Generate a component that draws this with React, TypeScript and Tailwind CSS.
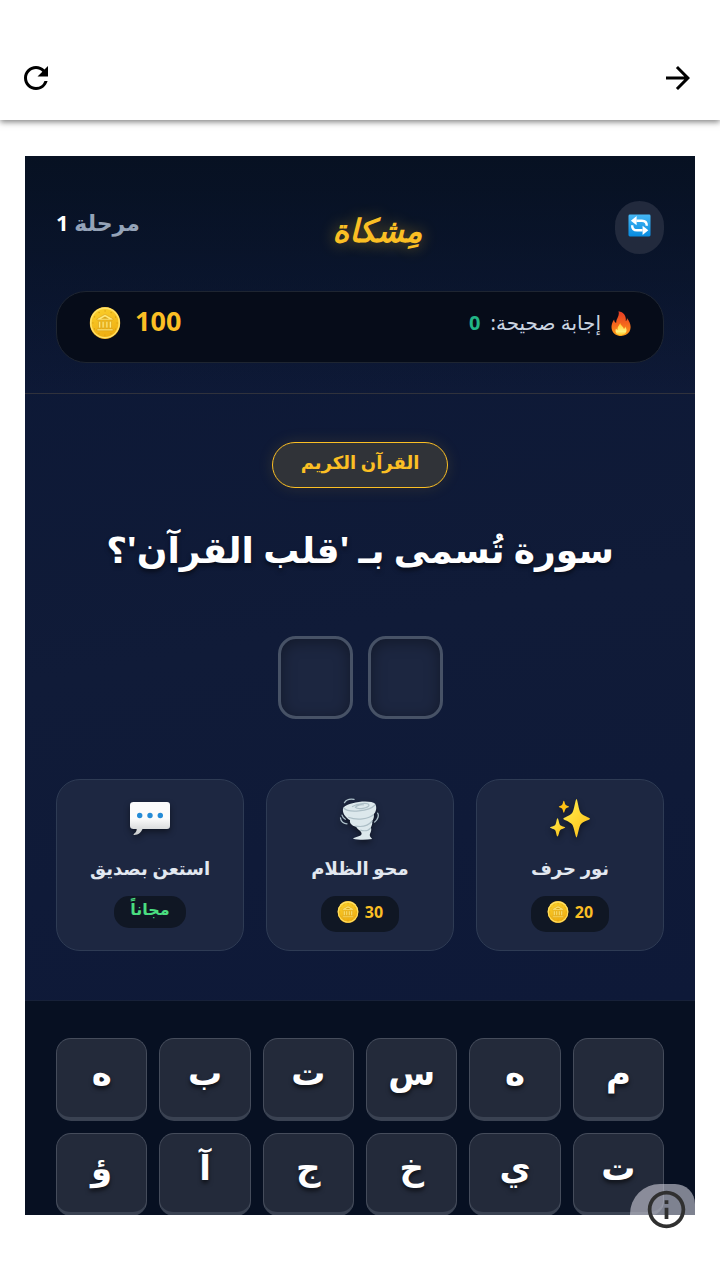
import { useId } from "react";
import { MdRefresh, MdArrowForward, MdInfoOutline } from "react-icons/md";

const hints = [
  { title: "نور حرف", cost: 20, icon: "sparkles" },
  { title: "محو الظلام", cost: 30, icon: "tornado" },
  { title: "استعن بصديق", cost: 0, icon: "chat" },
];

const letters = ["م", "ه", "س", "ت", "ب", "ه", "ت", "ي", "خ", "ج", "آ", "ؤ"];

function Coin({ className }: { className: string }) {
  const id = useId();
  return (
    <svg viewBox="0 0 32 32" className={className} aria-hidden="true">
      <defs>
        <linearGradient id={id} x1="0" y1="0" x2="0.3" y2="1">
          <stop offset="0" stopColor="#fbd02b" />
          <stop offset="1" stopColor="#efb013" />
        </linearGradient>
      </defs>
      <ellipse cx="16" cy="16" rx="15.2" ry="16" fill="#e5a51b" />
      <ellipse cx="16" cy="15.8" rx="15" ry="15.6" fill="#ffe36a" />
      <ellipse cx="16" cy="16" rx="13.5" ry="14" fill={`url(#${id})`} />
      <circle cx="16" cy="16" r="12.1" fill="none" stroke="#d99e13" strokeWidth="1.3" strokeLinecap="round" strokeDasharray="0.1 6.2" />
      <path d="M8 11.8L16 7.3L24 11.8V13H8ZM9.5 14.3H11.7V21H9.5ZM13.1 14.3H15.1V21H13.1ZM16.9 14.3H18.9V21H16.9ZM20.3 14.3H22.5V21H20.3ZM8 22H24V23.7H8Z" fill="#ffe978" stroke="#d99e18" strokeWidth="0.6" />
      <path d="M12 11.7L16 9.5L20 11.7Z" fill="#d9a41b" />
    </svg>
  );
}

function Fire() {
  return (
    <svg viewBox="0 0 20 25" className="h-[25px] w-5" aria-hidden="true">
      <defs>
        <linearGradient id="flame" x1="0" y1="0" x2="0" y2="1">
          <stop offset="0" stopColor="#e53b25" />
          <stop offset="0.5" stopColor="#f4641d" />
          <stop offset="1" stopColor="#ff9f16" />
        </linearGradient>
        <linearGradient id="flameCore" x1="0" y1="0" x2="0" y2="1">
          <stop offset="0" stopColor="#ffc928" />
          <stop offset="0.7" stopColor="#fff17d" />
          <stop offset="1" stopColor="#ffc31d" />
        </linearGradient>
      </defs>
      <path d="M7.4 0.3C13.6 1.2 15.4 6 14.7 10.1C15.8 9.4 16 8.1 15.9 6.9C20.8 12.6 21.2 20.5 15 23.8C11.7 25.5 7.2 25.3 4 23.2C-0.7 20 -0.3 13.1 3.1 8.5C3.3 10.8 4.2 11.6 5.2 11.9C4.7 7.8 9.2 4.8 7.4 0.3Z" fill="url(#flame)" />
      <path d="M9.3 11.7C9 14.3 12.4 15.1 12.9 18C14 17.4 14.1 16.5 14 15.6C17.3 19.2 15.1 23.8 10.2 24.2C5.4 24.1 3.5 20.8 5 17.4C5.5 18.3 6.1 18.7 6.8 18.7C5.9 15.8 8.4 14.5 9.3 11.7Z" fill="url(#flameCore)" />
    </svg>
  );
}

function SwapIcon() {
  return (
    <svg viewBox="0 0 24 24" className="mb-1 h-[23px] w-[23px]" aria-hidden="true">
      <defs>
        <linearGradient id="swapTile" x1="0" y1="0" x2="0" y2="1">
          <stop offset="0" stopColor="#46b7f4" />
          <stop offset="1" stopColor="#078be0" />
        </linearGradient>
      </defs>
      <rect x="0.5" y="0.5" width="23" height="23" rx="1.5" fill="url(#swapTile)" />
      <path d="M8.8 7H14.5C18.7 7 19.6 9.2 19.6 12.3M15.2 17H9.5C5.3 17 4.3 14.7 4.3 11.7" fill="none" stroke="white" strokeWidth="2.5" />
      <path d="M3 7L9 2.2V11.8ZM21.2 17L15.2 12.2V21.8Z" fill="white" />
    </svg>
  );
}

function HintIcon({ kind }: { kind: string }) {
  if (kind === "sparkles") {
    return (
      <svg viewBox="0 0 42 42" className="h-[42px] w-[42px] drop-shadow-[0_3px_3px_rgba(0,0,0,0.45)]" aria-hidden="true">
        <defs>
          <linearGradient id="star" x1="0" y1="0" x2="1" y2="1">
            <stop offset="0.2" stopColor="#ffe645" />
            <stop offset="1" stopColor="#fdbd14" />
          </linearGradient>
        </defs>
        <path d="M27.5 1C28.5 1 29.7 12.5 31.8 15.1C34 17.9 41 19.7 41 20.7C41 21.7 33.9 23.4 31.8 26.2C29.7 28.9 28.5 39.5 27.5 39.5C26.5 39.5 25.2 28.9 23 26.2C20.7 23.5 14.3 21.7 14.3 20.7C14.3 19.7 20.9 18.1 23.1 15.1C25.2 12.4 26.4 1 27.5 1Z" fill="url(#star)" />
        <path d="M8.5 20.2C9.5 20.2 10 25.3 11.1 27C12.1 28.2 16.2 28.8 16.2 29.6C16.2 30.4 12.2 31 11.1 32.2C10 33.7 9.5 38.5 8.5 38.5C7.5 38.5 7.3 33.8 6.2 32.2C5.2 31 1 30.4 1 29.6C1 28.8 5.1 28.3 6.2 27C7.4 25.3 7.6 20.2 8.5 20.2Z" fill="url(#star)" />
        <path d="M14.8 2.8C15.5 2.8 15.8 6 16.8 7.1C17.7 8 20 8.2 20 8.8C20 9.4 17.7 9.6 16.8 10.6C15.8 11.8 15.5 14.8 14.8 14.8C14.1 14.8 14 11.8 13 10.6C12.1 9.6 9.8 9.4 9.8 8.8C9.8 8.2 12.1 8 13 7.1C14 6 14.1 2.8 14.8 2.8Z" fill="#ffc114" />
      </svg>
    );
  }
  if (kind === "tornado") {
    return (
      <svg viewBox="0 0 42 42" className="h-[42px] w-[42px] drop-shadow-[0_3px_3px_rgba(0,0,0,0.45)]" aria-hidden="true">
        <path d="M14 40.7C16 38.2 22.5 39 22.6 35.7C22.3 32.5 18.5 31.8 17.1 28.8C12.3 27.8 10.2 24.6 11.1 22.3C6.4 19.7 2.4 14.1 4.4 9.5C9.7 3.7 31.8 1.3 36.1 5.8C38.2 9.4 37.2 14 34.7 16.3C35.5 19.2 34.3 21.4 33.2 23C33.7 26.3 32.4 28.1 31.8 29.8C33.2 32.4 31.1 34.8 30.8 37C30.6 38.5 32 39.8 33.2 41C27 42 19 42 14 40.7Z" fill="#dce8ec" />
        <path d="M4.6 10C9.5 15.1 29.9 13.5 36.1 7M9.2 19.2C18 22.5 30 21.2 34.7 16.3M16.4 28C22.5 29.2 29 28 33.2 23M21.3 32.2C25.5 33.3 29.5 32.6 31.8 29.8M13 8.8C19.1 5 29.2 4.3 30 7.2C29.6 10.2 18.9 11.8 16.4 9.4C17.8 7 23.8 6 24.8 7.2" fill="none" stroke="#adbfc7" strokeWidth="1.2" />
        <path d="M5.5 4.6C7.6 1.3 11.5 0.8 15 1.4M1.5 20C1.7 23.5 4.8 25.7 8 25.8M38.6 15.2C40.2 17.2 38.8 21.8 35.7 24.1M3 17.1C3.5 19 4.6 20.3 6.3 21.2" fill="none" stroke="#adc0c9" strokeWidth="1.3" strokeLinecap="round" />
      </svg>
    );
  }
  return (
    <svg viewBox="0 0 42 42" className="h-[42px] w-[42px] drop-shadow-[0_3px_3px_rgba(0,0,0,0.45)]" aria-hidden="true">
      <defs>
        <linearGradient id="bubble" x1="0" y1="0" x2="0" y2="1">
          <stop offset="0.5" stopColor="#fbfbfb" />
          <stop offset="1" stopColor="#c8cbcc" />
        </linearGradient>
      </defs>
      <path d="M4.5 4H38C40 4 41 5 41 7V28C41 30 40 31 38 31H13.5C12.4 34 9.3 37 5.4 37C4.4 37 4.2 36.3 5 35.7C7 34.4 7.8 32.8 7.7 31H4.5C2.3 31 1 30 1 28V7C1 5 2.3 4 4.5 4Z" fill="url(#bubble)" />
      <circle cx="10.7" cy="17.5" r="2.7" fill="#258bd6" />
      <circle cx="21" cy="17.5" r="2.7" fill="#258bd6" />
      <circle cx="31.3" cy="17.5" r="2.7" fill="#258bd6" />
    </svg>
  );
}

export default function App() {
  return (
    <div className="flex h-screen flex-col bg-white font-['Noto_Sans','DejaVu_Sans',sans-serif]">
      <header className="z-10 flex h-[120px] shrink-0 items-end justify-between bg-white px-[18px] pb-6 text-black shadow-[0_2px_6px_rgba(0,0,0,0.5)]">
        <button aria-label="تحديث"><MdRefresh className="h-9 w-9" /></button>
        <button aria-label="رجوع" className="pr-1.5"><MdArrowForward className="h-9 w-9" /></button>
      </header>

      <main className="min-h-0 flex-1 px-[25px] pt-9 pb-[65px]">
        <div className="relative h-full">
          <div dir="rtl" className="flex h-full flex-col overflow-hidden bg-[linear-gradient(170deg,#0b1735,#101b38_45%,#0d1838)]">
            <section className="shrink-0 border-b border-[#30323c] bg-gradient-to-b from-[#071122] to-transparent px-[31px] pt-[45px] pb-[30px]">
              <div className="flex h-[53px] items-center justify-between">
                <button aria-label="تبديل" className="flex h-[53px] w-[49px] items-center justify-center rounded-full bg-[#222a3d]">
                  <SwapIcon />
                </button>
                <h1 className="pt-2 text-center font-['DejaVu_Sans',sans-serif] text-[32px] leading-[53px] font-bold text-[#fbbf24] italic [text-shadow:0_0_16px_rgba(251,191,36,0.45)]">
                  مِشكاة
                </h1>
                <p className="pb-3 text-left text-[22px] leading-8 font-bold text-[#94a3b8]">
                  مرحلة <span className="text-white">1</span>
                </p>
              </div>
              <div className="mt-[37px] flex h-[72px] items-center justify-between rounded-[30px] border border-[#1e2531] bg-[#060c19] px-8 pb-2">
                <div className="flex items-center gap-2.5 text-xl text-[#cbd5e1]">
                  <Fire />
                  <span>إجابة صحيحة:</span>
                  <span className="font-bold text-[#22b586]">0</span>
                </div>
                <div className="flex items-center gap-3.5">
                  <span className="pb-1 text-[27px] leading-8 font-bold text-[#fbbf24]">100</span>
                  <Coin className="h-8 w-8" />
                </div>
              </div>
            </section>

            <section className="flex shrink-0 flex-col items-center px-[31px] pt-12 pb-[49px]">
              <div className="flex h-[46px] items-center justify-center rounded-full border border-[#fbbf24] bg-[#303338] px-7 pb-1.5 text-lg font-bold text-[#fbbf24] shadow-[0_0_16px_rgba(251,191,36,0.12)]">
                القرآن الكريم
              </div>
              <h2 className="mt-8 mb-1 text-center text-4xl leading-[60px] font-bold whitespace-nowrap text-white [text-shadow:0_3px_4px_rgba(0,0,0,0.5)]">
                سورة تُسمى بـ 'قلب القرآن'؟
              </h2>
              <div className="mt-[52px] flex gap-[15px]">
                {[0, 1].map((slot) => (
                  <div key={slot} className="h-[83px] w-[75px] rounded-[18px] border-[3px] border-[#475266] bg-[#1c2640] shadow-[inset_0_3px_15px_rgba(0,0,0,0.35)]" />
                ))}
              </div>
              <div className="mt-[60px] grid w-full grid-cols-3 gap-[22px]">
                {hints.map((hint) => (
                  <button key={hint.title} className="flex h-[172px] flex-col items-center rounded-3xl border border-[#2e3b54] bg-[#1d2741] pt-[18px]">
                    <HintIcon kind={hint.icon} />
                    <span className="mt-3.5 text-lg leading-7 font-bold whitespace-nowrap text-[#e2e8f0]">{hint.title}</span>
                    {hint.cost > 0 ? (
                      <span className="mt-3.5 flex h-9 items-center gap-[6px] rounded-[15px] bg-[#101724] px-4 pb-1 text-base font-bold text-[#fbbf24]">
                        {hint.cost}
                        <Coin className="h-[22px] w-[22px]" />
                      </span>
                    ) : (
                      <span className="mt-3.5 flex h-8 items-center rounded-[15px] bg-[#101724] px-4 pb-1.5 text-base font-bold text-[#4ade80]">
                        مجاناً
                      </span>
                    )}
                  </button>
                ))}
              </div>
            </section>

            <section className="grid shrink-0 grow grid-cols-6 content-start gap-3 border-t border-[#172139] bg-[#071022] px-[31px] pt-[37px]">
              {letters.map((letter, index) => (
                <button key={index} className="flex h-[83px] items-center justify-center rounded-[15px] border border-b-4 border-[#454c5b] border-b-[#3a4252] bg-[#232a3a] pb-3 text-[34px] leading-[48px] font-bold text-white [text-shadow:0_3px_4px_rgba(0,0,0,0.6)]">
                  {letter}
                </button>
              ))}
            </section>
          </div>

          <button aria-label="معلومات" className="absolute right-0 bottom-0 flex h-[31px] w-[65px] items-start rounded-tl-[30px] rounded-tr-[20px] bg-[#cfcfda]/60 pt-[3px] pl-3.5 text-[#303030]">
            <MdInfoOutline className="h-[45px] w-[45px] shrink-0" />
          </button>
        </div>
      </main>
    </div>
  );
}
